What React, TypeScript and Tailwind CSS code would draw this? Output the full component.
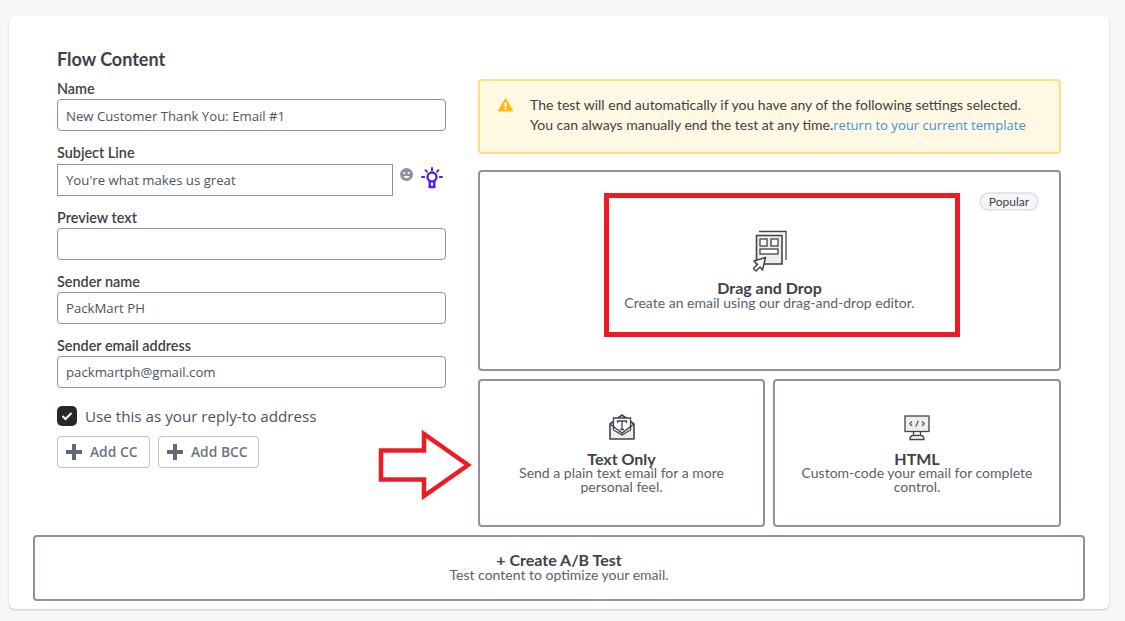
const sans = "font-['Open_Sans',sans-serif]";
const head = "font-['Lato',sans-serif]";

function Field({ label, value, className = "border-[#8d939e] pt-[2px]" }: { label: string; value?: string; className?: string }) {
  return (
    <div className="h-[64px]">
      <div className={`${head} h-[20px] text-[14.4px] leading-[20px] font-semibold text-[#3c4248]`}>{label}</div>
      <div className={`flex h-[32px] w-full items-center rounded-[4px] border bg-white px-[8px] text-[13.2px] text-[#4c5460] ${sans} ${className}`}>
        {value}
      </div>
    </div>
  );
}

function DragIcon() {
  return (
    <svg width="36" height="42" viewBox="0 0 36 42" fill="none" className="block">
      <path d="M7 1.500h27V30" stroke="#40464d" strokeWidth="1.300" />
      <rect x="4.500" y="5.500" width="25.500" height="28.500" fill="#eeeeec" stroke="#40464d" strokeWidth="1.600" />
      <rect x="8" y="9" width="7" height="7" fill="#fff" stroke="#40464d" strokeWidth="1.300" />
      <rect x="19" y="9" width="7" height="7" fill="#fff" stroke="#40464d" strokeWidth="1.300" />
      <rect x="8" y="19" width="18" height="5" fill="#fff" stroke="#40464d" strokeWidth="1.300" />
      <path d="M13.500 27.500L2 31l3.500 3.500-4 4L4 41l4-4 2.500 3z" fill="#fff" stroke="#40464d" strokeWidth="1.500" strokeLinejoin="round" />
    </svg>
  );
}

function EnvelopeIcon() {
  return (
    <svg width="28" height="28" viewBox="0 0 28 28" fill="none" className="block">
      <path d="M2 11v15h24V11L14 2z" fill="#eeeeec" stroke="#40464d" strokeWidth="1.600" strokeLinejoin="round" />
      <path d="M5.500 5h17v12l-8.500 5-8.500-5z" fill="#fff" stroke="#40464d" strokeWidth="1.300" />
      <path d="M2 11l12 9 12-9" stroke="#40464d" strokeWidth="1.400" />
      <path d="M9.500 10V8h9v2M14 8v8.500M12 16.500h4" stroke="#40464d" strokeWidth="1.300" />
    </svg>
  );
}

function MonitorIcon() {
  return (
    <svg width="26" height="26" viewBox="0 0 26 26" fill="none" className="block">
      <rect x="1" y="1" width="24" height="15.500" fill="#eeeeec" stroke="#40464d" strokeWidth="1.300" />
      <path d="M9.500 16.500v4M16.500 16.500v4M6 24.500c0-2.500 1.500-4 3.500-4h7c2 0 3.500 1.500 3.500 4z" fill="#fff" stroke="#40464d" strokeWidth="1.300" />
      <path d="M8 6.500L5.800 8.700 8 10.900M18 6.500l2.200 2.200-2.200 2.200M14.300 5.800l-2.600 5.800" stroke="#40464d" strokeWidth="1.100" />
    </svg>
  );
}

function BulbIcon() {
  return (
    <svg width="22" height="22" viewBox="0 0 22 22" fill="none" className="block">
      <circle cx="11" cy="10" r="4.500" stroke="#5a1fd6" strokeWidth="2.400" />
      <path d="M8.700 14v6h4.600v-6" stroke="#5a1fd6" strokeWidth="2.400" />
      <path d="M11 1v2.300M4.500 3.200l1.300 1.500M17.500 3.200l-1.300 1.500M1 10h2.200M18.800 10H21" stroke="#5a1fd6" strokeWidth="2" strokeLinecap="round" />
    </svg>
  );
}

function FaceIcon() {
  return (
    <svg width="13" height="13" viewBox="0 0 13 13" className="block">
      <circle cx="6.500" cy="6.500" r="6.500" fill="#8d939e" />
      <circle cx="4.300" cy="5" r="1.100" fill="#fff" />
      <circle cx="8.700" cy="5" r="1.100" fill="#fff" />
      <path d="M3.500 8h6c-.5 1.400-1.600 2-3 2s-2.500-.6-3-2z" fill="#fff" />
    </svg>
  );
}

function AddButton({ label, width }: { label: string; width: string }) {
  return (
    <div className={`flex h-[32px] items-center rounded-[4px] border border-[#bcc1c8] bg-white pl-[8px] ${width} ${sans} text-[13.8px] font-semibold text-[#6b7480]`}>
      <svg width="16" height="16" viewBox="0 0 16 16" className="mr-[8px] block">
        <path d="M6 0h4v6h6v4h-6v6H6v-6H0V6h6z" fill="#5f6a76" />
      </svg>
      {label}
    </div>
  );
}

function SmallOption({ title, text, icon, className }: { title: string; text: string; icon: React.ReactNode; className: string }) {
  return (
    <div className={`flex h-[148px] flex-col items-center rounded-[4px] border-2 border-[#8d939e] bg-white pt-[32px] text-center ${className}`}>
      <div className="flex h-[28px] items-end">{icon}</div>
      <div className={`${head} mt-[10px] text-[16px] leading-[15px] font-bold text-[#3c4248]`}>{title}</div>
      <div className={`${head} text-[14px] leading-[14px] text-[#5a616b]`}>{text}</div>
    </div>
  );
}

export default function App() {
  return (
    <div className="h-[621px] w-[1125px] overflow-hidden bg-[#f6f7f9] pt-[16px] pl-[9px]">
      <div className="relative h-[593px] w-[1100px] rounded-[6px] bg-white px-[24px] pt-[33px] shadow-[0_1px_2px_rgba(0,0,0,0.2)]">
        <div className="flex h-[486px] gap-[32px] pl-[24px]">
          <div className="w-[389px]">
            <h2 className={`${head} h-[30px] text-[18px] leading-[20px] font-bold text-[#3c4248]`}>Flow Content</h2>
            <Field label="Name" value="New Customer Thank You: Email #1" className="border-[#7f93a8] pt-[4px]" />
            <div className="h-[65px]">
              <div className={`${head} h-[21px] text-[14.4px] leading-[20px] font-semibold text-[#3c4248]`}>Subject Line</div>
              <div className="flex items-start">
                <div className={`flex h-[32px] w-[336px] items-center border border-[#8d939e] bg-white px-[8px] pt-[2px] text-[13.2px] text-[#4c5460] ${sans}`}>
                  You're what makes us great
                </div>
                <div className="mt-[4px] ml-[7px]"><FaceIcon /></div>
                <div className="mt-[3px] ml-[8px]"><BulbIcon /></div>
              </div>
            </div>
            <Field label="Preview text" />
            <Field label="Sender name" value="PackMart PH" />
            <Field label="Sender email address" value="packmartph@gmail.com" />
            <div className="mt-[6px] flex h-[20px] items-center">
              <div className="flex h-[20px] w-[20px] items-center justify-center rounded-[5px] bg-[#24272b]">
                <svg width="12" height="10" viewBox="0 0 12 10" fill="none">
                  <path d="M1.500 5l3 3 6-6" stroke="#fff" strokeWidth="2" />
                </svg>
              </div>
              <span className={`${sans} ml-[8px] text-[15.2px] text-[#4c5460]`}>Use this as your reply-to address</span>
            </div>
            <div className="mt-[10px] flex gap-[8px]">
              <AddButton label="Add CC" width="w-[93px]" />
              <AddButton label="Add BCC" width="w-[101px]" />
            </div>
          </div>

          <div className="w-[583px] pt-[30px]">
            <div className="flex h-[75px] rounded-[4px] border-2 border-[#fde084] bg-[#fff8e2] pt-[14px] pl-[18px]">
              <svg width="15" height="14" viewBox="0 0 16 14" className="mt-[3px] block shrink-0">
                <path d="M8 0a1 1 0 0 1 .9.500l7 12a1 1 0 0 1-.9 1.500H1a1 1 0 0 1-.9-1.500l7-12A1 1 0 0 1 8 0z" fill="#fdb813" />
                <path d="M7 4h2v5H7zM7 10h2v2H7z" fill="#fff" />
              </svg>
              <div className={`${head} ml-[17px] text-[14px] leading-[20px] text-[#3c4248]`}>
                <div>The test will end automatically if you have any of the following settings selected.</div>
                <div>
                  You can always manually end the test at any time.
                  <span className={`${sans} text-[13.1px] text-[#3d94d6]`}>return to your current template</span>
                </div>
              </div>
            </div>

            <div className="relative mt-[16px]">
              <div className="flex h-[201px] flex-col items-center justify-center rounded-[4px] border-2 border-[#8d939e] bg-white pb-[2px] text-center">
                <DragIcon />
                <div className={`${head} mt-[8px] text-[16px] leading-[16px] font-bold text-[#3c4248]`}>Drag and Drop</div>
                <div className={`${head} text-[14px] leading-[14px] text-[#5a616b]`}>Create an email using our drag-and-drop editor.</div>
              </div>
              <div className={`${head} absolute top-[22px] right-[22px] flex h-[19px] w-[60px] items-center justify-center rounded-full border-2 border-[#e3e6ea] bg-[#f4f5f7] text-[12px] text-[#3c4248]`}>
                Popular
              </div>
            </div>

            <div className="mt-[8px] flex gap-[8px]">
              <SmallOption title="Text Only" text="Send a plain text email for a more personal feel." icon={<EnvelopeIcon />} className="w-[287px] px-[30px]" />
              <SmallOption title="HTML" text="Custom-code your email for complete control." icon={<MonitorIcon />} className="w-[288px] px-[20px]" />
            </div>
          </div>
        </div>

        <div className="flex h-[66px] w-[1052px] flex-col items-center justify-center rounded-[4px] border-2 border-[#8d939e] bg-white pb-[2px]">
          <div className={`${head} text-[16px] leading-[16px] font-bold text-[#3c4248]`}>+ Create A/B Test</div>
          <div className={`${head} text-[14px] leading-[14px] text-[#5a616b]`}>Test content to optimize your email.</div>
        </div>

        {/* annotations drawn over the screenshot */}
        <div className="absolute top-[177px] left-[595px] h-[144px] w-[356px] border-[5px] border-[#ed1c24]" />
        <svg width="94" height="70" viewBox="0 0 94 70" fill="none" className="absolute top-[414px] left-[369px]">
          <path d="M3 20.500h43V4l44 31-44 31V49.500H3z" stroke="#ed1c24" strokeWidth="4.500" />
        </svg>
      </div>
    </div>
  );
}
